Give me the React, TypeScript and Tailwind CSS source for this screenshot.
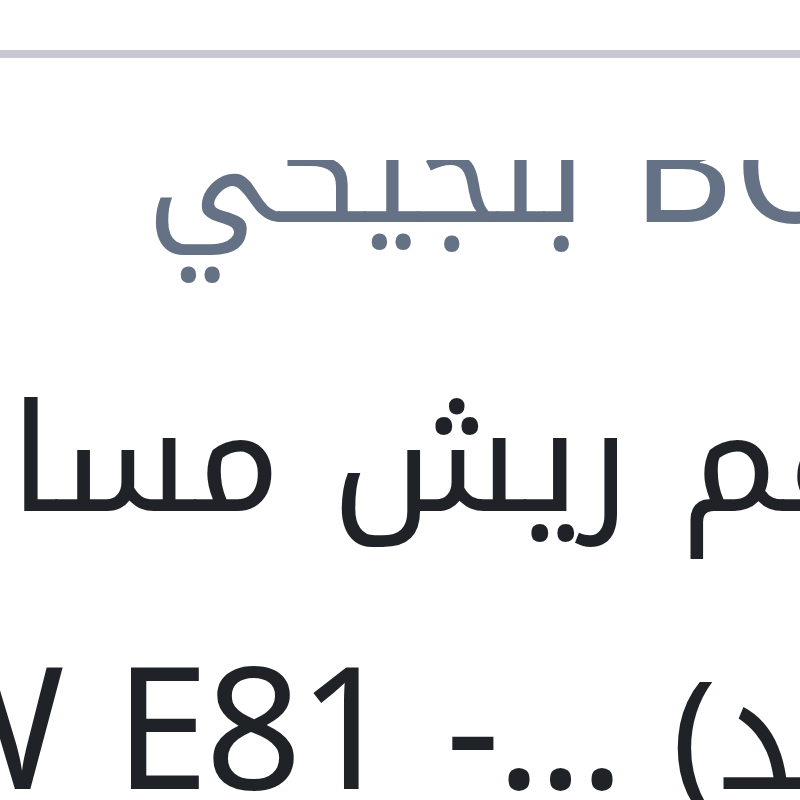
const ProductCard = () => {
  return (
    <div className="ml-[-350px] w-[1339px]">
      <div className="mt-[102px] h-[140px] overflow-hidden">
        <p className="-mt-[60px] whitespace-nowrap pl-[497px] text-[137px] leading-[140px] text-[#657184]">
          بلجيكي <span className="text-[157px]">BOSCH</span>
        </p>
      </div>
      <p className="mt-[25px] text-right text-[150px] leading-[272px] text-[#1f2328] [text-align-last:left]">
        طقم ريش مساحات{" "}
        <span className="whitespace-nowrap">
          <span className="text-[170px] tracking-[-4px]">BMW E81 -...</span> (جديد)
        </span>
      </p>
    </div>
  );
};

export default function App() {
  return (
    <div className="h-[800px] w-[800px] overflow-hidden bg-white font-['Noto_Kufi_Arabic',sans-serif]">
      <div className="mt-[50px] h-[8px] bg-[#c9c6d3]" />
      <ProductCard />
    </div>
  );
}
